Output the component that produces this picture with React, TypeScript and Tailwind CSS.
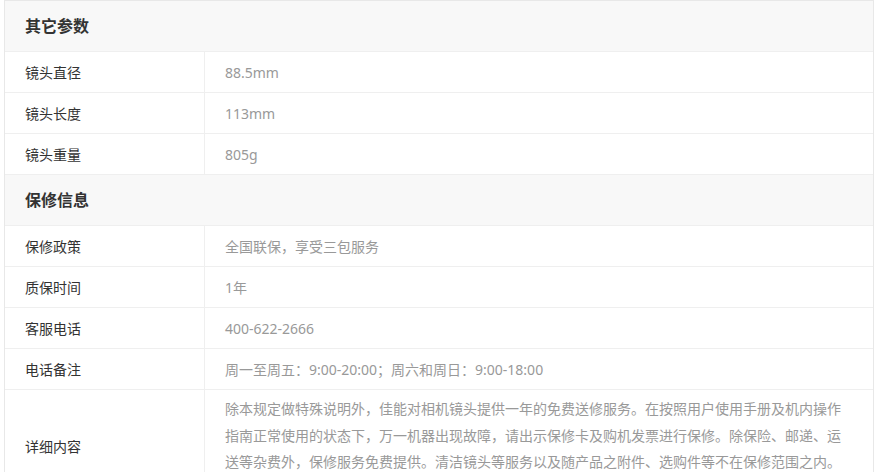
const sections = [
  {
    title: "其它参数",
    rows: [
      { label: "镜头直径", value: "88.5mm" },
      { label: "镜头长度", value: "113mm" },
      { label: "镜头重量", value: "805g" },
    ],
  },
  {
    title: "保修信息",
    rows: [
      { label: "保修政策", value: "全国联保，享受三包服务" },
      { label: "质保时间", value: "1年" },
      { label: "客服电话", value: "400-622-2666" },
      { label: "电话备注", value: "周一至周五：9:00-20:00；周六和周日：9:00-18:00" },
    ],
  },
];

const detailLines = [
  "除本规定做特殊说明外，佳能对相机镜头提供一年的免费送修服务。在按照用户使用手册及机内操作",
  "指南正常使用的状态下，万一机器出现故障，请出示保修卡及购机发票进行保修。除保险、邮递、运",
  "送等杂费外，保修服务免费提供。清洁镜头等服务以及随产品之附件、选购件等不在保修范围之内。",
];

function Row({ label, children }: { label: string; children: React.ReactNode }) {
  return (
    <div className="grid grid-cols-[200px_1fr] border-b border-[#efefef]">
      <div className="flex items-center px-5 border-r border-[#efefef] text-[14px] text-[#333]">
        {label}
      </div>
      {children}
    </div>
  );
}

export default function App() {
  return (
    <div
      className="h-[472px] overflow-hidden bg-white pl-[4px] pr-[6px]"
      style={{ fontFamily: '"Noto Sans", "Noto Sans CJK SC", sans-serif' }}
    >
      <div className="border border-b-0 border-[#e8e8e8]">
        {sections.map((section) => (
          <div key={section.title}>
            {/* Section header */}
            <div className="h-[51px] flex items-center px-5 bg-[#f8f8f8] border-b border-[#efefef] text-[16px] font-bold text-[#333]">
              {section.title}
            </div>
            {section.rows.map((row) => (
              <Row key={row.label} label={row.label}>
                <div className="h-[40px] flex items-center px-5 text-[14px] text-[#999]">
                  {row.value}
                </div>
              </Row>
            ))}
          </div>
        ))}
        <Row label="详细内容">
          <div className="px-5 pt-[6px] pb-[28px] text-[14px] leading-[26.5px] text-[#999]">
            {detailLines.map((line, i) => (
              <div key={i} className="whitespace-nowrap">
                {line}
              </div>
            ))}
          </div>
        </Row>
      </div>
    </div>
  );
}
